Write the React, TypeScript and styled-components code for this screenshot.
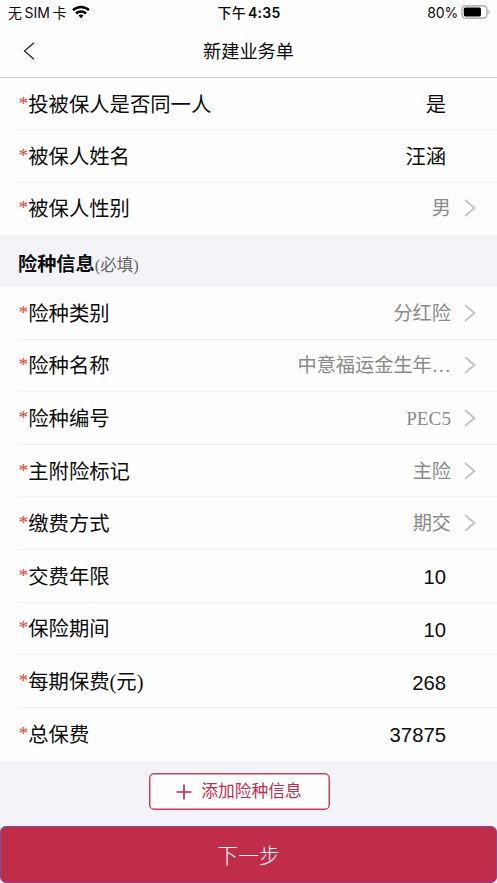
import React from "react";
import styled, { createGlobalStyle } from "styled-components";

const serif = '"Liberation Serif", "Noto Sans CJK SC", serif';
const sans = '"Liberation Sans", "Noto Sans CJK SC", sans-serif';

const GlobalStyle = createGlobalStyle`
  * { box-sizing: border-box; }
  body { margin: 0; background: #f3f3f8; }
`;

const Screen = styled.div`
  width: 497px;
  height: 883px;
  display: flex;
  flex-direction: column;
  overflow: hidden;
  background: #f3f3f8;
  color: #0c0c0c;
  font-family: ${serif};
`;

const StatusBar = styled.div`
  height: 26px;
  flex: none;
  display: grid;
  grid-template-columns: 1fr auto 1fr;
  align-items: center;
  padding: 0 7px 0 8px;
  background: #fdfdfd;
  font: 14px/26px Inter, "Noto Sans CJK SC", sans-serif;
  white-space: nowrap;
`;

const Carrier = styled.div`
  display: flex;
  align-items: center;
  gap: 2.5px;
  svg { margin-left: 3px; margin-top: -2px; }
`;

const Clock = styled.div`
  font-weight: 600;
  font-size: 14px;
  letter-spacing: 0.25px;
`;

const ClockPeriod = styled.span`
  font-weight: 500;
  font-size: 14px;
  margin-right: 2px;
`;

const Battery = styled.div`
  display: flex;
  justify-content: flex-end;
  align-items: center;
  gap: 3px;
  letter-spacing: -0.15px;
  svg { margin-top: -2px; }
`;

const NavBar = styled.header`
  height: 52px;
  flex: none;
  display: grid;
  grid-template-columns: 60px 1fr 60px;
  align-items: center;
  background: #fdfdfd;
  border-bottom: 1px solid #cbcbcb;
`;

const BackButton = styled.button`
  display: flex;
  border: 0;
  padding: 0 0 2px 23px;
  background: none;
`;

const Title = styled.h1`
  margin: 0;
  text-align: center;
  font: 400 18.2px/26px ${sans};
`;

const Group = styled.section<{ $height: number }>`
  height: ${(p) => p.$height}px;
  flex: none;
  display: flex;
  flex-direction: column;
  padding-left: 18px;
  background: #fefefe;
`;

const Row = styled.div`
  flex: 1;
  min-height: 0;
  display: flex;
  align-items: center;
  justify-content: space-between;
  border-bottom: 1px solid #f0f0f2;
  &:last-child { border-bottom-color: transparent; }
`;

const Label = styled.label`
  display: flex;
  font-size: 20.35px;
  line-height: 30px;
  white-space: nowrap;
  padding-top: 2px;
`;

const Required = styled.span`
  width: 10.2px;
  padding-left: 0.5px;
  color: #f03a30;
  font-size: 19.5px;
  line-height: 28px;
`;

const InputValue = styled.span`
  font: 20.3px/30px ${sans};
  padding: 3px 51px 0 0;
`;

const Choice = styled.span`
  display: flex;
  align-items: center;
  gap: 13px;
  padding-right: 21px;
  color: #8a8a8a;
  font-size: 19.2px;
  line-height: 30px;
`;

const ChoiceText = styled.span`
  padding-top: 2px;
`;

const SectionHeader = styled.div`
  height: 52px;
  flex: none;
  display: flex;
  align-items: center;
  padding: 8px 0 0 18px;
`;

const SectionTitle = styled.h2`
  margin: 0;
  font: 700 19.2px/28px ${sans};
`;

const Hint = styled.span`
  color: #666;
  font-size: 16.5px;
  line-height: 28px;
  padding-top: 1px;
`;

const Actions = styled.div`
  flex: 1;
  display: flex;
  justify-content: center;
  align-items: flex-start;
  padding-top: 12px;
  margin-left: -19px;
`;

const AddButton = styled.button`
  width: 181px;
  height: 37px;
  display: flex;
  align-items: center;
  justify-content: center;
  gap: 9px;
  padding: 0;
  border: 1px solid #c1405b;
  box-shadow: inset 0 0 0 0.5px #c1405b;
  border-radius: 5px;
  background: #fefefe;
  color: #bd2e4d;
  font: 16.8px/24px ${sans};
  svg { margin-top: 1px; }
`;

const AddText = styled.span`
  padding-top: 1px;
`;

const NextButton = styled.button`
  width: 100%;
  height: 57px;
  flex: none;
  border: 1px solid #7650a0;
  border-radius: 6px;
  background: #bf2d49;
  color: #fff;
  padding: 2px 0 0;
  font: 300 21px/30px ${sans};
`;

const Wifi = () => (
  <svg width="18" height="14" viewBox="0 0 18 14" fill="none" stroke="#000" strokeWidth="2.5">
    <path d="M1 5.2C5.5 .8 12.5 .8 17 5.2" />
    <path d="M4 8.5C6.8 5.8 11.2 5.8 14 8.5" />
    <path d="M6.5 10.6Q9 8.6 11.5 10.6L9 13.2Z" fill="#000" stroke="none" />
  </svg>
);

const BatteryIcon = () => (
  <svg width="29" height="14" viewBox="0 0 29 14" fill="none">
    <rect x="1" y=".8" width="25" height="12.4" rx="3.6" stroke="#a0a0a0" strokeWidth="1.2" />
    <rect x="2.8" y="2.6" width="17.2" height="8.8" rx="1.7" fill="#000" />
    <path d="M27.5 5v4.2c1.5-.7 1.5-3.5 0-4.2Z" fill="#999" />
  </svg>
);

const Chevron = () => (
  <svg width="12" height="18" viewBox="0 0 12 18" fill="none" stroke="#c3c3c6" strokeWidth="1.9">
    <path d="M1 1l9.4 8L1 17" />
  </svg>
);

interface Field {
  label: string;
  value: string;
  choice?: boolean;
}

const insured: Field[] = [
  { label: "投被保人是否同一人", value: "是" },
  { label: "被保人姓名", value: "汪涵" },
  { label: "被保人性别", value: "男", choice: true },
];

const policy: Field[] = [
  { label: "险种类别", value: "分红险", choice: true },
  { label: "险种名称", value: "中意福运金生年…", choice: true },
  { label: "险种编号", value: "PEC5", choice: true },
  { label: "主附险标记", value: "主险", choice: true },
  { label: "缴费方式", value: "期交", choice: true },
  { label: "交费年限", value: "10" },
  { label: "保险期间", value: "10" },
  { label: "每期保费(元)", value: "268" },
  { label: "总保费", value: "37875" },
];

const FormRow = ({ label, value, choice }: Field) => (
  <Row>
    <Label><Required>*</Required>{label}</Label>
    {choice ? (
      <Choice><ChoiceText>{value}</ChoiceText><Chevron /></Choice>
    ) : (
      <InputValue>{value}</InputValue>
    )}
  </Row>
);

export default function App() {
  return (
    <Screen>
      <GlobalStyle />
      <StatusBar>
        <Carrier><span>无</span><span>SIM</span><span>卡</span><Wifi /></Carrier>
        <Clock><ClockPeriod>下午</ClockPeriod>4:35</Clock>
        <Battery><span>80%</span><BatteryIcon /></Battery>
      </StatusBar>
      <NavBar>
        <BackButton aria-label="返回">
          <svg width="12" height="18" viewBox="0 0 12 18" fill="none" stroke="#222" strokeWidth="1.3">
            <path d="M11 .7L1.5 9l9.5 8.3" />
          </svg>
        </BackButton>
        <Title>新建业务单</Title>
      </NavBar>
      <Group $height={157}>
        {insured.map((f) => <FormRow key={f.label} {...f} />)}
      </Group>
      <SectionHeader>
        <SectionTitle>险种信息</SectionTitle><Hint>(必填)</Hint>
      </SectionHeader>
      <Group $height={473.5}>
        {policy.map((f) => <FormRow key={f.label} {...f} />)}
      </Group>
      <Actions>
        <AddButton>
          <svg width="16" height="16" viewBox="0 0 16 16" stroke="#bd2e4d" strokeWidth="1.7">
            <path d="M8 .5v15M.5 8h15" />
          </svg>
          <AddText>添加险种信息</AddText>
        </AddButton>
      </Actions>
      <NextButton>下一步</NextButton>
    </Screen>
  );
}
